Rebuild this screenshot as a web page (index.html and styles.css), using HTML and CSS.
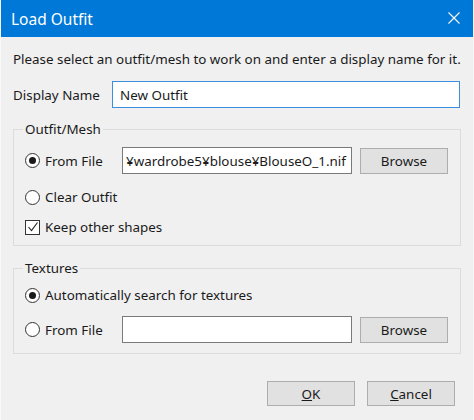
FILE: index.html
```html
<!DOCTYPE HTML><html>
<head>
  <title>Load Outfit</title>
  <meta charset="UTF-8">
  <link rel="stylesheet" href="styles.css">
</head>
<body>
  <div class="window">
    <div class="titlebar">
      <span class="title">Load Outfit</span>
      <svg class="close" width="12" height="12" viewBox="0 0 12 12">
        <path d="M0.5 0.5 L11.5 11.5 M11.5 0.5 L0.5 11.5" stroke="#fff" stroke-width="1.1" fill="none"/>
      </svg>
    </div>
    <div class="content">
      <p class="intro">Please select an outfit/mesh to work on and enter a display name for it.</p>
      <div class="name-row">
        <span class="label">Display Name</span>
        <div class="input focused">New Outfit</div>
      </div>

      <fieldset class="group">
        <legend>Outfit/Mesh</legend>
        <div class="row file-row">
          <span class="opt wide"><span class="radio on"></span>From File</span>
          <div class="input path">&yen;wardrobe5&yen;blouse&yen;BlouseO_1.nif</div>
          <button class="button">Browse</button>
        </div>
        <div class="row gap12">
          <span class="opt"><span class="radio"></span>Clear Outfit</span>
        </div>
        <div class="row gap8">
          <span class="opt"><span class="check">
            <svg width="12" height="12" viewBox="0 0 12 12"><path d="M1.5 6 L4.5 9.5 L10.5 1.5" stroke="#222" stroke-width="1.1" fill="none"/></svg>
          </span>Keep other shapes</span>
        </div>
      </fieldset>

      <fieldset class="group textures">
        <legend>Textures</legend>
        <div class="row">
          <span class="opt"><span class="radio on"></span>Automatically search for textures</span>
        </div>
        <div class="row file-row gap10">
          <span class="opt wide"><span class="radio"></span>From File</span>
          <div class="input path"></div>
          <button class="button">Browse</button>
        </div>
      </fieldset>

      <div class="actions">
        <button class="button big"><u>O</u>K</button>
        <button class="button big"><u>C</u>ancel</button>
      </div>
    </div>
  </div>
</body>
</html>
```

FILE: styles.css
```css
html {
  font-family: "Noto Sans", "Open Sans", sans-serif;
  font-size: 13.4px;
  color: #1a1a1a;
}
body {
  margin: 0;
  background-color: #f0f0f0;
}
.window {
  width: 474px;
  height: 420px;
  box-sizing: border-box;
  border-left: 1px solid #f8f8f8;
  border-right: 1px solid #f8f8f8;
  overflow: hidden;
}
.titlebar {
  height: 37px;
  background-color: #0078d7;
  display: flex;
  align-items: center;
  justify-content: space-between;
  padding: 0 13px 0 10px;
}
.title {
  color: white;
  font-size: 15.5px;
}
.close {
  margin-top: -1px;
}
.content {
  padding: 0 12px;
}
.intro {
  margin: 13px 0 0 0;
  line-height: 19px;
  white-space: nowrap;
}
.name-row {
  display: flex;
  align-items: center;
  margin-top: 12px;
}
.name-row .label {
  width: 99px;
}
.input {
  box-sizing: border-box;
  height: 27px;
  background-color: white;
  border: 1px solid #7a7a7a;
  padding: 0 7px;
  display: flex;
  align-items: center;
  white-space: nowrap;
  overflow: hidden;
}
.input.focused {
  width: 348px;
  border-color: #3c8ede;
}
.input.path {
  width: 230px;
  padding: 0 3px;
}
.group {
  margin: 12px 0 0 0;
  padding: 8px 11px 7px 11px;
  border: 1px solid #dcdcdc;
  min-width: 0;
}
.group legend {
  padding: 0 2px;
  margin-left: -2px;
  line-height: 19px;
}
.textures {
  margin-top: 13px;
  padding-top: 6px;
  padding-bottom: 10px;
}
.row {
  display: flex;
  align-items: center;
  height: 22px;
}
.file-row {
  height: 27px;
}
.gap12 { margin-top: 12px; }
.gap10 { margin-top: 10px; }
.gap8 { margin-top: 8px; }
.opt {
  display: flex;
  align-items: center;
}
.opt.wide {
  width: 97px;
}
.radio {
  box-sizing: border-box;
  width: 15px;
  height: 15px;
  border: 1px solid #333;
  border-radius: 50%;
  margin-right: 5px;
  display: flex;
  align-items: center;
  justify-content: center;
  background-color: white;
}
.radio.on::after {
  content: "";
  width: 7px;
  height: 7px;
  border-radius: 50%;
  background-color: #1a1a1a;
}
.check {
  box-sizing: border-box;
  width: 15px;
  height: 15px;
  border: 1px solid #333;
  margin-right: 5px;
  background-color: white;
  display: flex;
  align-items: center;
  justify-content: center;
}
.button {
  font-family: inherit;
  font-size: 13.4px;
  color: #1a1a1a;
  background-color: #e1e1e1;
  border: 1px solid #adadad;
  border-radius: 0;
  width: 88px;
  height: 26px;
  margin-left: 8px;
  padding: 0;
}
.actions {
  display: flex;
  justify-content: flex-end;
  margin-top: 27px;
  padding-right: 6px;
}
.button.big {
  height: 25px;
  margin-left: 12px;
}
```
